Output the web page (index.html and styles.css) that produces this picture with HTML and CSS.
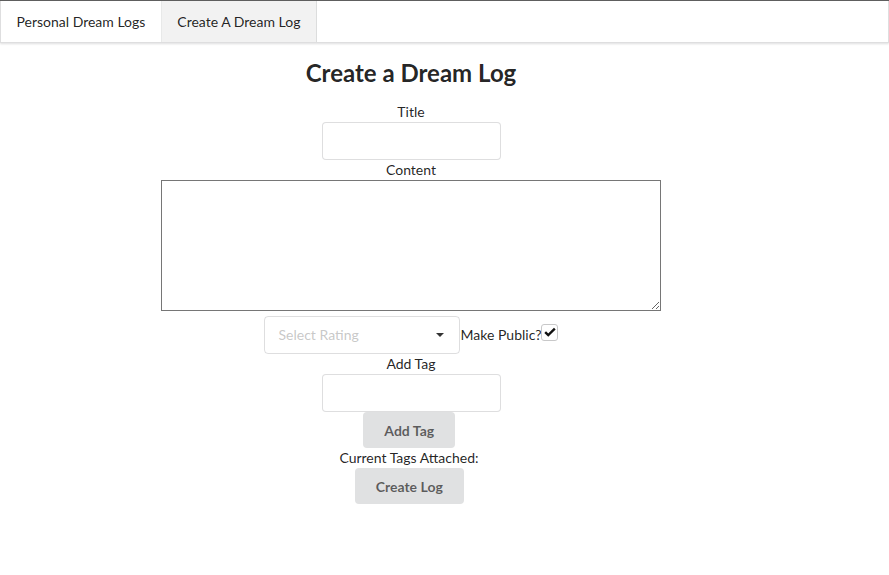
FILE: index.html
```html
<!DOCTYPE html>
<html>
<head>
<meta charset="utf-8">
<link rel="stylesheet" href="styles.css">
</head>
<body>
<div class="topline"></div>
<nav class="menu">
  <a class="item">Personal Dream Logs</a>
  <a class="item active">Create A Dream Log</a>
</nav>
<main class="page">
  <h2 class="heading">Create a Dream Log</h2>
  <label class="lbl">Title</label>
  <input class="field" type="text">
  <label class="lbl">Content</label>
  <textarea class="content"></textarea>
  <div class="row">
    <div class="dropdown">
      <span class="placeholder">Select Rating</span>
      <span class="caret"></span>
    </div>
    <span class="public">Make Public?</span>
    <span class="checkbox">
      <svg width="12" height="10" viewBox="0 0 13 11"><path d="M1.2 5.6 L4.6 9 L11.8 1.8" fill="none" stroke="#111" stroke-width="2.6"/></svg>
    </span>
  </div>
  <label class="lbl">Add Tag</label>
  <input class="field" type="text">
  <button class="btn">Add Tag</button>
  <div class="lbl tags">Current Tags Attached:</div>
  <button class="btn">Create Log</button>
</main>
</body>
</html>
```
FILE: styles.css
```css
html, body {
  margin: 0;
  padding: 0;
  background: #fff;
  font-family: Lato, "Helvetica Neue", Arial, sans-serif;
  font-size: 14px;
  line-height: 20px;
  color: rgba(0, 0, 0, 0.87);
}

.topline {
  height: 1px;
  background: #5f5f5f;
}

.menu {
  display: flex;
  height: 41px;
  border: 1px solid rgba(34, 36, 38, 0.15);
  border-top: none;
  box-shadow: 0 1px 2px 0 rgba(34, 36, 38, 0.15);
  background: #fff;
}

.item {
  display: flex;
  align-items: center;
  padding: 0 15.5px;
  border-right: 1px solid rgba(34, 36, 38, 0.1);
  color: rgba(0, 0, 0, 0.87);
  font-size: 14px;
  cursor: pointer;
}

.item.active {
  background: rgba(0, 0, 0, 0.05);
}

.page {
  width: 822px;
  display: flex;
  flex-direction: column;
  align-items: center;
}

.heading {
  margin: 14px 0 14px;
  font-size: 24px;
  line-height: 31px;
  font-weight: 700;
  color: rgba(0, 0, 0, 0.87);
}

.lbl {
  display: block;
  height: 20px;
  line-height: 20px;
  font-size: 14px;
}

.tags {
  padding-right: 4px;
}

.field {
  box-sizing: border-box;
  width: 179px;
  height: 38px;
  margin: 0;
  padding: 9px 14px;
  border: 1px solid rgba(34, 36, 38, 0.15);
  border-radius: 4px;
  font-family: Lato, sans-serif;
  font-size: 14px;
  outline: none;
}

.content {
  box-sizing: border-box;
  width: 500px;
  height: 131px;
  margin: 0;
  border: 1px solid #767676;
  font-family: monospace;
}

.row {
  display: flex;
  align-items: center;
  margin-top: 5px;
  height: 38px;
}

.dropdown {
  box-sizing: border-box;
  width: 196px;
  height: 38px;
  padding: 0 14px;
  border: 1px solid rgba(34, 36, 38, 0.15);
  border-radius: 4px;
  display: flex;
  align-items: center;
  justify-content: space-between;
}

.placeholder {
  color: rgba(191, 191, 191, 0.87);
}

.caret {
  width: 0;
  height: 0;
  margin-right: 1px;
  border-left: 4px solid transparent;
  border-right: 4px solid transparent;
  border-top: 4px solid rgba(0, 0, 0, 0.8);
}

.public {
  margin-left: 1px;
}

.checkbox {
  box-sizing: border-box;
  width: 17px;
  height: 17px;
  margin-top: -6px;
  border: 1px solid #c8c8c9;
  border-radius: 3px;
  display: flex;
  align-items: center;
  justify-content: center;
}

.btn {
  margin: 0 3.5px 0 0;
  height: 36px;
  padding: 0 21px;
  border: none;
  border-radius: 4px;
  background: #e0e1e2;
  color: rgba(0, 0, 0, 0.6);
  font-family: Lato, sans-serif;
  font-size: 14px;
  font-weight: 700;
  cursor: pointer;
}
```
